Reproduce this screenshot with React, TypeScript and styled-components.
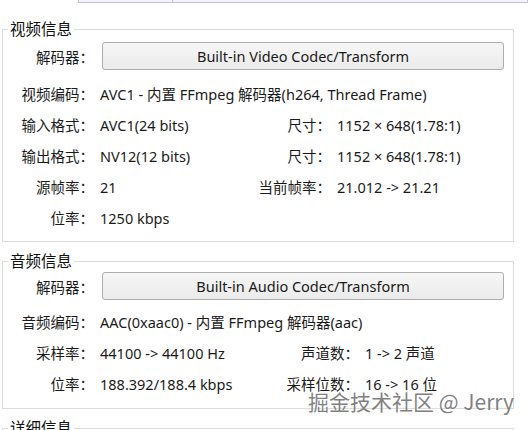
import React from "react";
import styled, { createGlobalStyle } from "styled-components";

const Global = createGlobalStyle`
  html, body { margin: 0; padding: 0; background: #ffffff; }
  body {
    font-family: "Noto Sans", "Noto Sans CJK SC", sans-serif;
    color: #1a1a1a;
    overflow: hidden;
  }
`;

const Page = styled.div`
  position: relative;
  width: 528px;
  height: 430px;
  overflow: hidden;
`;

const TopStrip = styled.div`
  display: flex;
  margin-left: 78px;
  height: 3px;
`;

const TopCell = styled.div<{ $w?: number }>`
  ${(p) => (p.$w ? `width: ${p.$w}px;` : "flex: 1;")}
  background: #f2f2fb;
  border: 1px solid #c4c4d8;
  border-top: none;
  & + & { border-left: none; }
`;

const Group = styled.fieldset<{ $top: number }>`
  margin: ${(p) => p.$top}px 0 0 2px;
  width: 510px;
  border: 1px solid #dcdcdc;
  padding: 0;
  min-width: 0;
`;

const Legend = styled.legend`
  margin-left: 5px;
  padding: 0 2px;
  font-size: 15.5px;
  line-height: 18px;
  color: #111;
`;

const Body = styled.div<{ $pt: number; $pb: number }>`
  padding: ${(p) => p.$pt}px 0 ${(p) => p.$pb}px 0;
`;

const Grid = styled.div<{ $v1: number }>`
  display: grid;
  grid-template-columns: 91px ${(p) => p.$v1}px 91px 1fr;
  column-gap: 6px;
  grid-auto-rows: 31px;
  align-items: center;
  font-size: 14.5px;
`;

const Label = styled.div`
  text-align: right;
  white-space: nowrap;
`;

const Value = styled.div<{ $span?: boolean }>`
  white-space: nowrap;
  ${(p) => (p.$span ? "grid-column: 2 / -1;" : "")}
`;

const ButtonRow = styled.div<{ $mb: number }>`
  display: grid;
  grid-template-columns: 91px 1fr;
  column-gap: 8px;
  align-items: center;
  margin-bottom: ${(p) => p.$mb}px;
  font-size: 14.5px;
  padding-right: 9px;
`;

const CodecButton = styled.div`
  height: 26px;
  border: 1px solid #adadad;
  border-radius: 3px;
  background: linear-gradient(#f6f6f6, #ebebeb);
  display: flex;
  align-items: center;
  justify-content: center;
  font-size: 14.5px;
  color: #1a1a1a;
`;

const Watermark = styled.div`
  position: absolute;
  right: 14px;
  top: 389px;
  font-size: 21px;
  line-height: 24px;
  color: rgba(105, 105, 105, 0.85);
  text-shadow: 0 0 1px rgba(255, 255, 255, 0.9);
  white-space: nowrap;
  font-family: "Noto Sans CJK SC", "Noto Sans", sans-serif;
`;

type Pair = [string, string];

function Row({ a, b }: { a: Pair; b?: Pair }) {
  return (
    <>
      <Label>{a[0]}</Label>
      <Value $span={!b}>{a[1]}</Value>
      {b && (
        <>
          <Label>{b[0]}</Label>
          <Value>{b[1]}</Value>
        </>
      )}
    </>
  );
}

export default function App() {
  return (
    <Page>
      <Global />
      <TopStrip>
        <TopCell $w={93} />
        <TopCell />
      </TopStrip>

      <Group $top={17}>
        <Legend>视频信息</Legend>
        <Body $pt={4} $pb={8}>
          <ButtonRow $mb={8}>
            <Label>解码器：</Label>
            <CodecButton>Built-in Video Codec/Transform</CodecButton>
          </ButtonRow>
          <Grid $v1={134}>
            <Row a={["视频编码：", "AVC1 - 内置 FFmpeg 解码器(h264, Thread Frame)"]} />
            <Row a={["输入格式：", "AVC1(24 bits)"]} b={["尺寸：", "1152 × 648(1.78:1)"]} />
            <Row a={["输出格式：", "NV12(12 bits)"]} b={["尺寸：", "1152 × 648(1.78:1)"]} />
            <Row a={["源帧率：", "21"]} b={["当前帧率：", "21.012 -> 21.21"]} />
            <Row a={["位率：", "1250 kbps"]} />
          </Grid>
        </Body>
      </Group>

      <Group $top={10}>
        <Legend>音频信息</Legend>
        <Body $pt={2} $pb={9}>
          <ButtonRow $mb={6}>
            <Label>解码器：</Label>
            <CodecButton>Built-in Audio Codec/Transform</CodecButton>
          </ButtonRow>
          <Grid $v1={162}>
            <Row a={["音频编码：", "AAC(0xaac0) - 内置 FFmpeg 解码器(aac)"]} />
            <Row a={["采样率：", "44100 -> 44100 Hz"]} b={["声道数：", "1 -> 2 声道"]} />
            <Row a={["位率：", "188.392/188.4 kbps"]} b={["采样位数：", "16 -> 16 位"]} />
          </Grid>
        </Body>
      </Group>

      <Group $top={10}>
        <Legend>详细信息</Legend>
        <Body $pt={30} $pb={10} />
      </Group>

      <Watermark>掘金技术社区 @ Jerry</Watermark>
    </Page>
  );
}
